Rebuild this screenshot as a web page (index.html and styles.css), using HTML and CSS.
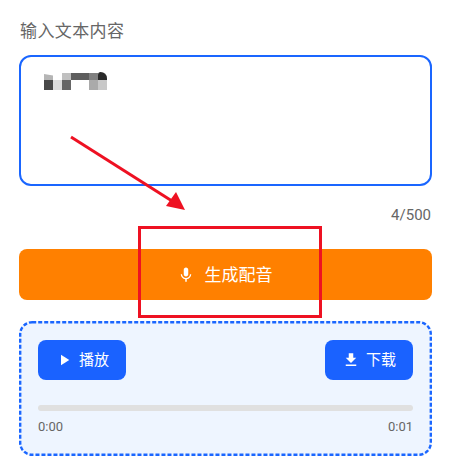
FILE: index.html
```html
<!DOCTYPE html>
<html lang="zh">
<head>
    <meta charset="UTF-8">
    <meta name="viewport" content="width=device-width, initial-scale=1.0">
    <title>生成配音</title>
    <link rel="stylesheet" href="styles.css">
</head>
<body>
    <div class="container">
        <label class="field-label">输入文本内容</label>
        <div class="text-box">
            <!-- pixelated text -->
            <div class="mosaic">
                <i class="c1"></i><i></i><i class="c2"></i><i class="c3"></i><i class="c3"></i><i class="c4"></i><i class="c5"></i>
                <i class="c6"></i><i class="c7"></i><i class="c8"></i><i></i><i></i><i class="c9"></i><i class="c10"></i>
            </div>
        </div>
        <div class="counter">4/500</div>

        <button class="generate-btn">
            <svg class="icon" viewBox="0 0 24 24"><path d="M12 14c1.66 0 2.99-1.34 2.99-3L15 5c0-1.66-1.34-3-3-3S9 3.34 9 5v6c0 1.66 1.34 3 3 3zm5.3-3c0 3-2.54 5.08-5.3 5.08S6.700 14 6.700 11H5c0 3.410 2.720 6.230 6 6.720V21h2v-3.280c3.280-.48 6-3.300 6-6.720h-1.700z"/></svg>
            <span class="btn-text">生成配音</span>
        </button>

        <div class="player">
            <svg class="player-border" width="413" height="135" viewBox="0 0 413 135">
                <rect x="1.200" y="1.200" width="410.600" height="132.600" rx="12" fill="none" stroke="#1a66ff" stroke-width="2.400" stroke-dasharray="4 2"/>
            </svg>
            <div class="player-actions">
                <button class="action-btn">
                    <svg class="icon" viewBox="0 0 24 24"><path d="M8 5v14l11-7z"/></svg>
                    <span class="btn-text">播放</span>
                </button>
                <button class="action-btn">
                    <svg class="icon" viewBox="0 0 24 24"><path d="M19 9h-4V3H9v6H5l7 7 7-7zM5 18v2h14v-2H5z"/></svg>
                    <span class="btn-text">下载</span>
                </button>
            </div>
            <div class="progress"></div>
            <div class="times">
                <span>0:00</span>
                <span>0:01</span>
            </div>
        </div>
    </div>

    <!-- red annotation drawn on top of the screenshot -->
    <svg class="annotation" width="449" height="474" viewBox="0 0 449 474">
        <rect x="139.500" y="227.500" width="181" height="89" fill="none" stroke="#ee1122" stroke-width="3"/>
        <line x1="71" y1="137" x2="172" y2="201" stroke="#ee1122" stroke-width="3"/>
        <polygon points="185,210 166,206 176,192" fill="#ee1122"/>
    </svg>
</body>
</html>
```

FILE: styles.css
```css
* {
    box-sizing: border-box;
}

body {
    margin: 0;
    background-color: #ffffff;
    font-family: Roboto, 'Noto Sans CJK SC', sans-serif;
    color: #666666;
}

.container {
    padding: 20px 17px 0 19px;
}

.field-label {
    display: block;
    height: 35px;
    padding-left: 1px;
    font-size: 17px;
    line-height: 23px;
    letter-spacing: 0.4px;
}

.text-box {
    height: 131px;
    padding: 15px 23px;
    border: 2px solid #1a66ff;
    border-radius: 12px;
}

.mosaic {
    display: grid;
    grid-template-columns: repeat(7, 9px);
    grid-template-rows: 8px 10px;
}

.c1 {
    margin-top: 2px;
    background-color: #b5b5b5;
    clip-path: polygon(0 0, 100% 25%, 100% 100%, 0 100%);
}
.c2 { margin-top: 1px; background-color: #c0c0c0; }
.c3 { margin-top: 1px; background-color: #5e5e5e; }
.c4 { margin-top: 1px; background-color: #808080; }
.c5 { background-color: #2a2a2a; border-top-right-radius: 7px; border-top-left-radius: 3px; }
.c6 { background-color: #484848; }
.c7 { background-color: #dcdcdc; }
.c8 { background-color: #666666; }
.c9 { background-color: #aaaaaa; }
.c10 { background-color: #c8c8c8; }

.counter {
    margin-top: 21px;
    padding-right: 1px;
    font-size: 15px;
    line-height: 16px;
    text-align: right;
}

.generate-btn {
    display: flex;
    align-items: center;
    justify-content: center;
    gap: 10px;
    width: 100%;
    height: 51px;
    margin-top: 26px;
    padding: 0 2px 0 0;
    border: none;
    border-radius: 8px;
    background-color: #ff8000;
    color: #ffffff;
    font-family: inherit;
    font-size: 17px;
}

.btn-text {
    margin-bottom: 3px;
}

.icon {
    width: 18px;
    height: 18px;
    fill: #ffffff;
}

.player {
    position: relative;
    height: 135px;
    margin-top: 21px;
    padding: 19px 19px 0;
    border-radius: 13px;
    background-color: #eef5ff;
}

.player-border {
    position: absolute;
    top: 0;
    left: 0;
}

.player-actions {
    position: relative;
    display: flex;
    justify-content: space-between;
}

.action-btn {
    display: flex;
    align-items: center;
    justify-content: center;
    gap: 6px;
    width: 88px;
    height: 40px;
    padding: 0;
    border: none;
    border-radius: 8px;
    background-color: #1a62ff;
    color: #ffffff;
    font-family: inherit;
    font-size: 15px;
}

.progress {
    height: 6px;
    margin-top: 25px;
    border-radius: 3px;
    background-color: #e0e0e0;
}

.times {
    display: flex;
    justify-content: space-between;
    margin-top: 8px;
    font-size: 13px;
    line-height: 16px;
}

.annotation {
    position: absolute;
    top: 0;
    left: 0;
    pointer-events: none;
}
```
